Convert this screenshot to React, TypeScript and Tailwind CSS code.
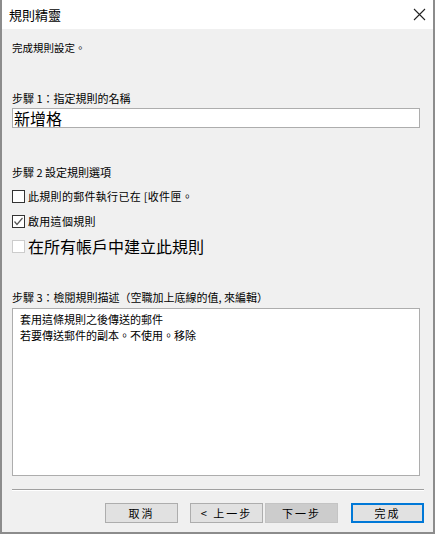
import React from "react";

const font = { fontFamily: '"Noto Sans CJK TC", "Noto Sans", sans-serif' };

function CheckRow({
  label,
  checked,
  disabled,
  big,
  className,
}: {
  label: string;
  checked?: boolean;
  disabled?: boolean;
  big?: boolean;
  className?: string;
}) {
  return (
    <div className={`flex items-center h-[14px] ${className ?? ""}`}>
      <div
        className={`w-[13px] h-[13px] shrink-0 bg-white border flex items-center justify-center ${
          disabled ? "border-[#cccccc]" : "border-[#333333]"
        }`}
      >
        {checked && (
          <svg width="11" height="11" viewBox="0 0 11 11">
            <polyline points="1.5,5.5 4,8.5 9.5,2" fill="none" stroke="#555" strokeWidth="1.2" />
          </svg>
        )}
      </div>
      <span
        className={`ml-[3px] text-black whitespace-nowrap ${
          big ? "text-[16px] leading-[16px]" : "text-[11px] leading-[14px] tracking-[0.3px]"
        }`}
      >
        {label}
      </span>
    </div>
  );
}

function Btn({
  children,
  className,
}: {
  children: React.ReactNode;
  className?: string;
}) {
  return (
    <button
      className={`h-[20px] w-[73px] flex items-center justify-center text-[11px] leading-none text-black tracking-[2px] ${className ?? ""}`}
    >
      {children}
    </button>
  );
}

export default function App() {
  return (
    <div
      style={font}
      className="w-[435px] h-[534px] bg-[#f0f0f0] border-x-2 border-b-2 border-[#8c8c8c] flex flex-col"
    >
      {/* Title bar */}
      <div className="h-[29px] bg-white flex items-center justify-between pl-[7px] pr-[7px] shrink-0">
        <span className="text-[13px] leading-none text-black">規則精靈</span>
        <svg width="13" height="13" viewBox="0 0 13 13">
          <path d="M1 1 L12 12 M12 1 L1 12" stroke="#222" strokeWidth="1.1" />
        </svg>
      </div>

      <div className="flex flex-col pl-[10px]">
        <div className="mt-[12px] text-[10.5px] leading-[14px] text-black">完成規則設定。</div>

        {/* Step 1 */}
        <div className="mt-[36px] text-[11px] leading-[14px] text-black">步驟 1：指定規則的名稱</div>
        <div className="mt-[3px] w-[408px] h-[20px] bg-white border border-[#adadad] flex items-center pl-[1px]">
          <span className="text-[16px] leading-none text-black">新增格</span>
        </div>

        {/* Step 2 */}
        <div className="mt-[37px] text-[11px] leading-[14px] text-black">步驟 2 設定規則選項</div>
        <CheckRow className="mt-[10px]" label="此規則的郵件執行已在 [收件匣。" />
        <CheckRow className="mt-[11px]" label="啟用這個規則" checked />
        <CheckRow className="mt-[11px]" label="在所有帳戶中建立此規則" disabled big />

        {/* Step 3 */}
        <div className="mt-[37px] text-[11px] leading-[14px] text-black whitespace-nowrap">
          步驟 3：檢閱規則描述（空職加上底線的值, 來編輯）
        </div>
        <div className="mt-[4px] w-[408px] h-[168px] bg-white border border-[#adadad] pl-[7px] pt-[2px] text-[11px] leading-[16px] text-black">
          <div>套用這條規則之後傳送的郵件</div>
          <div>若要傳送郵件的副本。不使用。移除</div>
        </div>

        {/* Separator */}
        <div className="mt-[13px] w-[412px] border-t border-[#a0a0a0] border-b border-b-white" />

        {/* Buttons */}
        <div className="mt-[12px] flex pr-[9px] justify-end">
          <Btn className="bg-[#e1e1e1] border border-[#adadad]">取消</Btn>
          <Btn className="ml-[12px] w-[72px] bg-[#e1e1e1] border border-[#adadad]">&lt; 上一步</Btn>
          <Btn className="ml-[2px] w-[72px] bg-[#cccccc] border border-[#c4c4c4]">下一步</Btn>
          <Btn className="ml-[13px] w-[72px] bg-[#e1e1e1] border-2 border-[#0078d7]">完成</Btn>
        </div>
      </div>
    </div>
  );
}
